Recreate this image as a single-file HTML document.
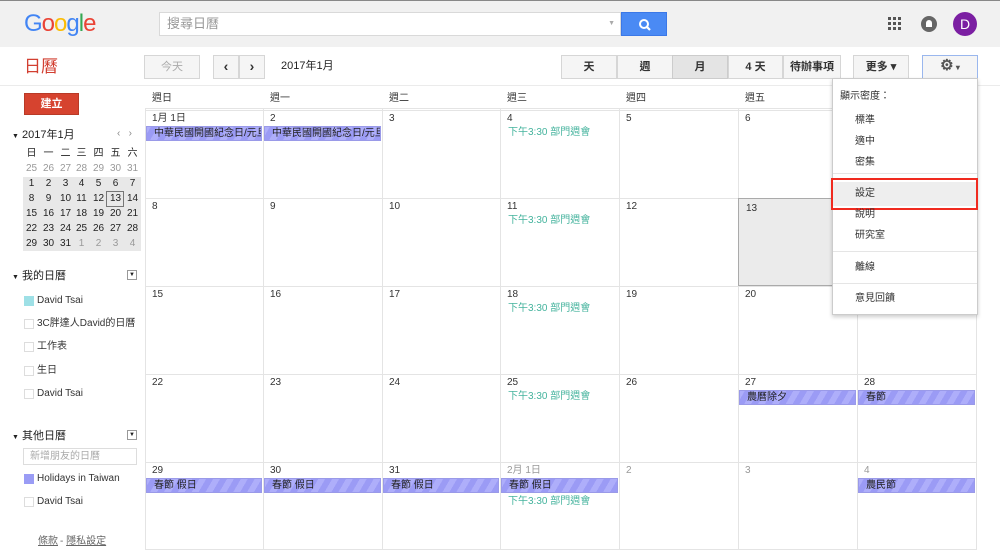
<!DOCTYPE html>
<html><head><meta charset="utf-8"><style>
*{box-sizing:border-box;margin:0;padding:0}
body{width:1000px;height:550px;overflow:hidden;background:#fff;font-family:"Liberation Sans","Noto Sans CJK TC",sans-serif;font-size:11px;line-height:13px;color:#222;position:relative}
.a{position:absolute}
.btn{position:absolute;border:1px solid #d6d6d6;background:#f5f5f5;text-align:center;font-size:11px;line-height:22px;height:24px;color:#333;font-weight:bold}
.vl{position:absolute;width:1px;background:#e4e4e4}
.hl{position:absolute;height:1px;background:#e4e4e4;left:145px;width:832px}
.d{position:absolute;font-size:10px;line-height:12px;color:#333}
.ev{position:absolute;height:15px;background:repeating-linear-gradient(-60deg,#9b9bf5 0 6px,#aeaefa 6px 12px);font-size:10px;line-height:13px;padding-left:7px;color:#222;overflow:hidden;white-space:nowrap;border:1px solid #9a9ae8}
.tm{position:absolute;font-size:10px;line-height:12px;color:#44b39d}
.mini{position:absolute;font-size:10px;line-height:12px;width:17px;text-align:center}
.cb{position:absolute;left:24px;width:10px;height:10px;border:1px solid #ddd;background:#fff}
.lb{position:absolute;left:37px;font-size:10px;line-height:12px;color:#333}
.mi{position:absolute;left:855px;font-size:10px;line-height:12px;color:#333}
</style></head><body>
<div class="a" style="left:0;top:0;width:1000px;height:47px;background:#f1f1f1;border-top:1px solid #888"></div>
<div class="a" style="left:24px;top:10px;font-size:24px;line-height:28px;letter-spacing:-1px;font-family:'Liberation Sans',sans-serif"><span style="color:#4285f4">G</span><span style="color:#ea4335">o</span><span style="color:#fbbc05">o</span><span style="color:#4285f4">g</span><span style="color:#34a853">l</span><span style="color:#ea4335">e</span></div>
<div class="a" style="left:159px;top:12px;width:462px;height:24px;background:#fff;border:1px solid #d9d9d9;color:#999;font-size:13px;line-height:22px;padding-left:7px">搜尋日曆<span style="position:absolute;right:5px;top:0;font-size:7px;color:#aaa">▼</span></div>
<div class="a" style="left:621px;top:12px;width:46px;height:24px;background:#4a8af4;border:1px solid #3b78e7"><svg width="46" height="24"><circle cx="22" cy="11" r="4" fill="none" stroke="#fff" stroke-width="2"/><line x1="25" y1="14" x2="28" y2="17" stroke="#fff" stroke-width="2.2"/></svg></div>
<svg class="a" style="left:888px;top:17px" width="14" height="14"><g fill="#555"><rect x="0" y="0" width="3" height="3"/><rect x="5" y="0" width="3" height="3"/><rect x="10" y="0" width="3" height="3"/><rect x="0" y="5" width="3" height="3"/><rect x="5" y="5" width="3" height="3"/><rect x="10" y="5" width="3" height="3"/><rect x="0" y="10" width="3" height="3"/><rect x="5" y="10" width="3" height="3"/><rect x="10" y="10" width="3" height="3"/></g></svg>
<div class="a" style="left:921px;top:16px;width:16px;height:16px;border-radius:50%;background:#666"><div style="position:absolute;left:5px;top:4px;width:6px;height:7px;background:#fff;border-radius:3px 3px 0 0"></div></div>
<div class="a" style="left:953px;top:12px;width:24px;height:24px;border-radius:50%;background:#7b1fa2;color:#fff;font-size:14px;text-align:center;line-height:24px">D</div>
<div class="a" style="left:0;top:85px;width:1000px;height:1px;background:#ebebeb"></div>
<div class="a" style="left:24px;top:57px;font-size:17px;line-height:20px;color:#d23f31">日曆</div>
<div class="btn" style="left:144px;top:55px;width:56px;color:#aaa;font-weight:normal">今天</div>
<div class="btn" style="left:213px;top:55px;width:26px;font-size:14px;line-height:20px">‹</div>
<div class="btn" style="left:239px;top:55px;width:26px;font-size:14px;line-height:20px">›</div>
<div class="a" style="left:281px;top:60px;font-size:11px">2017年1月</div>
<div class="btn" style="left:561px;top:55px;width:56px">天</div>
<div class="btn" style="left:617px;top:55px;width:56px">週</div>
<div class="btn" style="left:672px;top:55px;width:56px;background:#e4e4e4;border-color:#ccc">月</div>
<div class="btn" style="left:728px;top:55px;width:55px">4 天</div>
<div class="btn" style="left:783px;top:55px;width:58px">待辦事項</div>
<div class="btn" style="left:853px;top:55px;width:56px">更多 ▾</div>
<div class="btn" style="left:922px;top:55px;width:56px;border-color:#9ab7ee;background:#f5f5f5;font-size:15px;line-height:20px;color:#555">⚙<span style="font-size:8px"> ▾</span></div>
<div class="a" style="left:24px;top:93px;width:55px;height:22px;background:#d6432f;border:1px solid #b83a27;color:#fff;font-weight:bold;text-align:center;line-height:20px;font-size:11px">建立</div>
<div class="a" style="left:12px;top:129px;font-size:11px"><span style="font-size:7px">▼</span> 2017年1月</div>
<div class="a" style="left:117px;top:127px;font-size:10px;color:#888">‹ &nbsp; ›</div>
<div class="a" style="left:23px;top:177px;width:118px;height:74px;background:#e8e8e8"></div>
<div class="a" style="left:106px;top:191px;width:18px;height:16px;border:1px solid #777"></div>
<div id="mini"></div>
<div class="a" style="left:12px;top:270px;font-size:11px"><span style="font-size:7px">▼</span> 我的日曆</div>
<div class="a" style="left:127px;top:270px;width:10px;height:10px;border:1px solid #999;font-size:6px;text-align:center;line-height:8px">▼</div>
<div class="cb" style="top:296px;background:#9ee0e6;border-color:#9ee0e6"></div><div class="lb" style="top:295px">David Tsai</div>
<div class="cb" style="top:319px"></div><div class="lb" style="top:318px">3C胖達人David的日曆</div>
<div class="cb" style="top:342px"></div><div class="lb" style="top:341px">工作表</div>
<div class="cb" style="top:366px"></div><div class="lb" style="top:365px">生日</div>
<div class="cb" style="top:389px"></div><div class="lb" style="top:388px">David Tsai</div>
<div class="a" style="left:12px;top:430px;font-size:11px"><span style="font-size:7px">▼</span> 其他日曆</div>
<div class="a" style="left:127px;top:430px;width:10px;height:10px;border:1px solid #999;font-size:6px;text-align:center;line-height:8px">▼</div>
<div class="a" style="left:23px;top:448px;width:114px;height:17px;border:1px solid #ddd;color:#aaa;font-size:10px;line-height:15px;padding-left:6px">新增朋友的日曆</div>
<div class="cb" style="top:474px;background:#9a9cf5;border-color:#9a9cf5"></div><div class="lb" style="top:473px">Holidays in Taiwan</div>
<div class="cb" style="top:497px"></div><div class="lb" style="top:496px">David Tsai</div>
<div class="a" style="left:38px;top:535px;font-size:10px;color:#666;text-decoration:underline">條款</div><div class="a" style="left:60px;top:535px;font-size:10px;color:#666">- <u>隱私設定</u></div>
<div id="grid"></div>
<div class="a" style="left:738px;top:198px;width:119px;height:88px;background:#ebebeb;border:1px solid #aaa"></div>
<div class="d" style="left:746px;top:203px">13</div>
<div class="a" style="left:832px;top:78px;width:146px;height:237px;background:#fff;border:1px solid #ccc;box-shadow:0 2px 4px rgba(0,0,0,.2)"></div>
<div class="a" style="left:840px;top:91px;font-size:10px;line-height:12px;color:#333">顯示密度：</div>
<div class="mi" style="top:115px">標準</div><div class="mi" style="top:136px">適中</div><div class="mi" style="top:157px">密集</div>
<div class="a" style="left:833px;top:173px;width:144px;height:1px;background:#e5e5e5"></div>
<div class="a" style="left:833px;top:182px;width:144px;height:24px;background:#eee"></div>
<div class="mi" style="top:188px">設定</div>
<div class="a" style="left:831px;top:178px;width:147px;height:32px;border:2px solid #f02a1f"></div>
<div class="mi" style="top:209px">說明</div><div class="mi" style="top:230px">研究室</div>
<div class="a" style="left:833px;top:251px;width:144px;height:1px;background:#e5e5e5"></div>
<div class="mi" style="top:262px">離線</div>
<div class="a" style="left:833px;top:283px;width:144px;height:1px;background:#e5e5e5"></div>
<div class="mi" style="top:293px">意見回饋</div>
<script>
var g='',xs=[145,263,382,500,619,738,857,976],ys=[110,198,286,374,462,549];
var wd=['週日','週一','週二','週三','週四','週五','週六'];
for(var i=0;i<7;i++)g+='<div class="d" style="left:'+(xs[i]+7)+'px;top:93px">'+wd[i]+'</div>';
for(i=0;i<8;i++)g+='<div class="vl" style="left:'+xs[i]+'px;top:108px;height:441px"></div>';
for(i=0;i<6;i++)g+='<div class="hl" style="top:'+ys[i]+'px"></div>';
g+='<div class="hl" style="top:108px"></div>';
var d=[['1月 1日',2,3,4,5,6,7],[8,9,10,11,12,13,14],[15,16,17,18,19,20,21],[22,23,24,25,26,27,28],[29,30,31,'2月 1日',2,3,4]];
for(var r=0;r<5;r++)for(i=0;i<7;i++){if(r==1&&i==5)continue;var gr=(r==4&&i>2);g+='<div class="d" style="left:'+(xs[i]+7)+'px;top:'+(ys[r]+3)+'px;color:'+(gr?'#999':'#333')+'">'+d[r][i]+'</div>';}
function ev(r,c,t){g+='<div class="ev" style="left:'+(xs[c]+1)+'px;top:'+(ys[r]+16)+'px;width:'+(xs[c+1]-xs[c]-2)+'px">'+t+'</div>';}
ev(0,0,'中華民國開國紀念日/元旦');ev(0,1,'中華民國開國紀念日/元旦');ev(3,5,'農曆除夕');ev(3,6,'春節');
ev(4,0,'春節 假日');ev(4,1,'春節 假日');ev(4,2,'春節 假日');ev(4,3,'春節 假日');ev(4,6,'農民節');
[[0,3,17],[1,3,17],[2,3,17],[3,3,17],[4,3,34]].forEach(function(a){g+='<div class="tm" style="left:'+(xs[a[1]]+8)+'px;top:'+(ys[a[0]]+a[2])+'px">下午3:30 部門週會</div>';});
document.getElementById('grid').outerHTML=g;
var m='',h=['日','一','二','三','四','五','六'];
function cx(i){return Math.round(23+i*16.8);}
for(i=0;i<7;i++)m+='<div class="mini" style="left:'+cx(i)+'px;top:148px">'+h[i]+'</div>';
for(r=0;r<6;r++)for(i=0;i<7;i++){var v,gray;if(r==0){v=25+i;gray=1}else{var k=(r-1)*7+i+1;if(k>31){v=k-31;gray=1}else{v=k;gray=0}}
m+='<div class="mini" style="left:'+cx(i)+'px;top:'+(163+r*15)+'px;color:'+(gray?'#999':'#222')+'">'+v+'</div>';}
document.getElementById('mini').outerHTML=m;
</script>
</body></html>
